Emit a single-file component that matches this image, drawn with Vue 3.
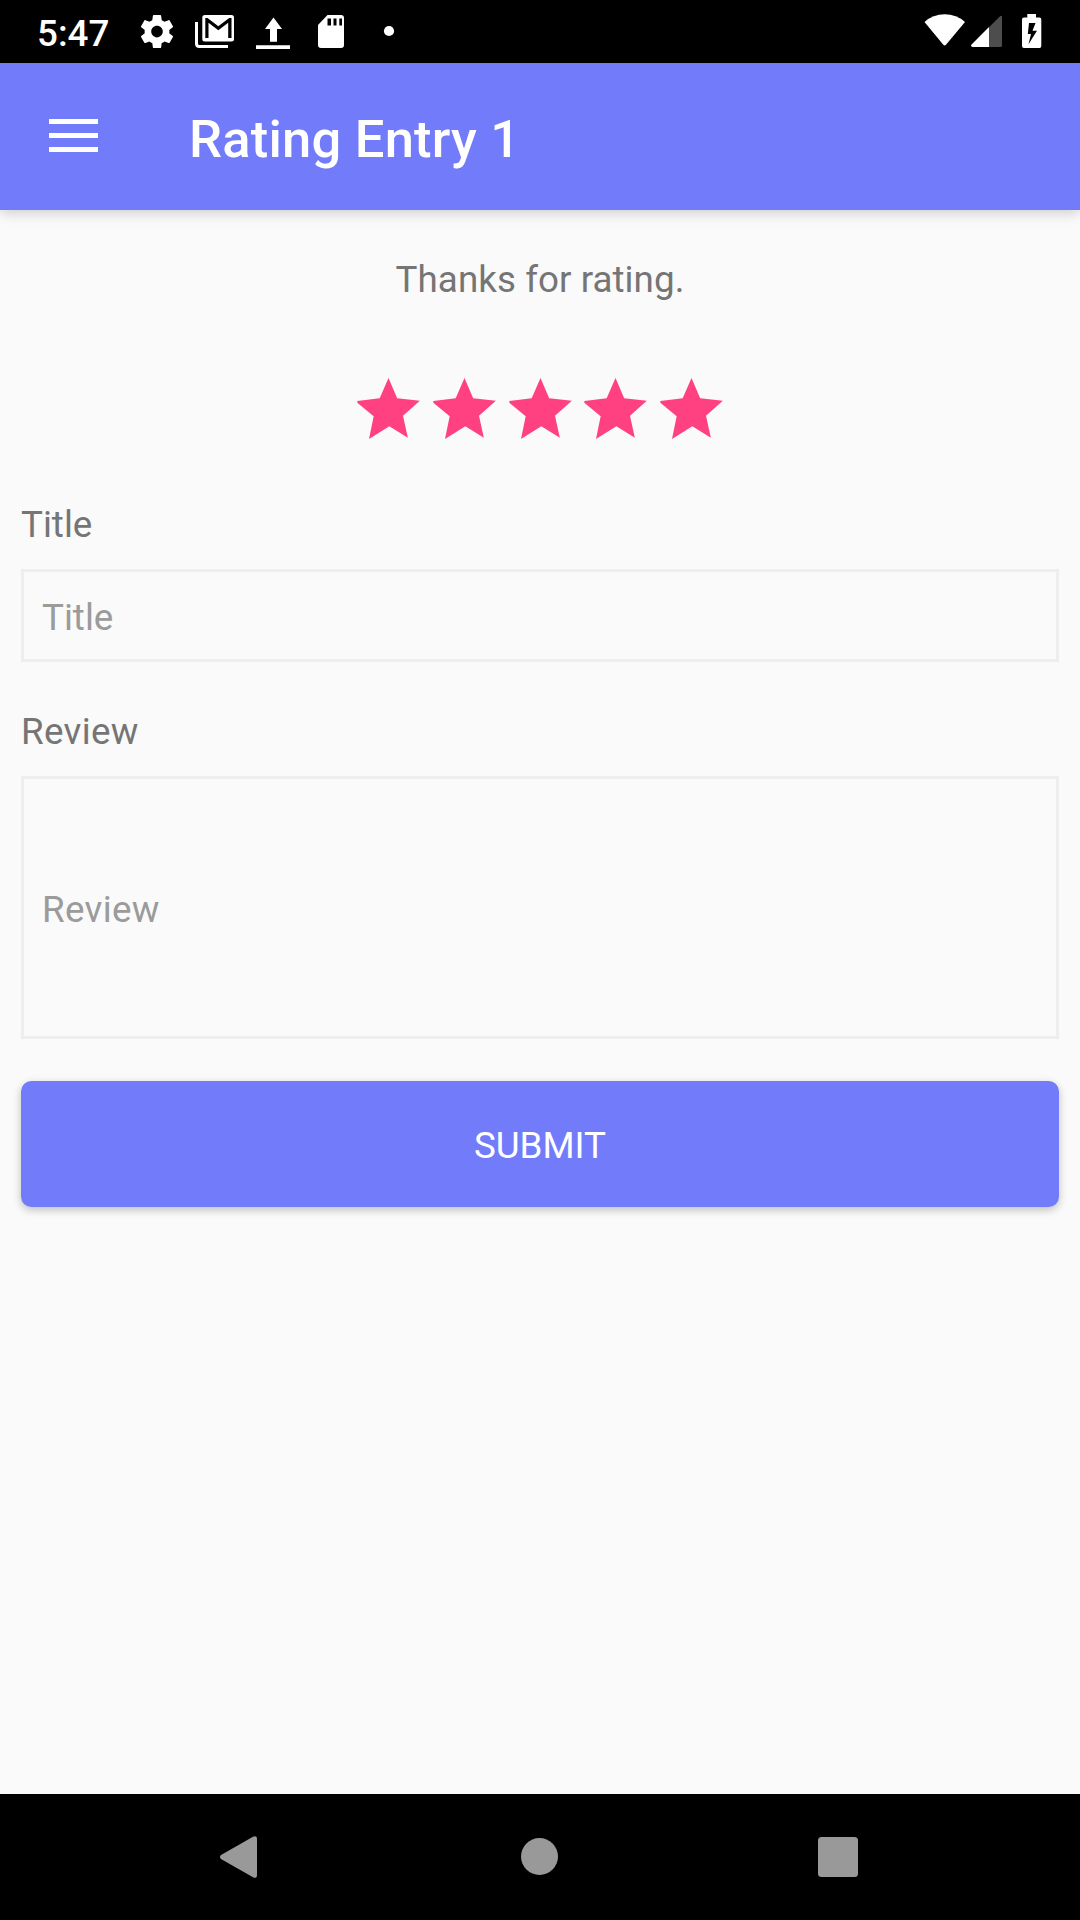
<script setup>
import { ref } from 'vue'

const stars = [1, 2, 3, 4, 5]
const title = ref('')
const review = ref('')
</script>

<template>
  <div class="screen">
    <header class="status">
      <span class="clock">5:47</span>
      <svg class="notices" width="260" height="63" viewBox="0 0 260 63" fill="#fff">
        <g transform="translate(7.2 11.8) scale(1.65)">
          <path d="M19.43 12.98c.04-.32.07-.64.07-.98s-.03-.66-.07-.98l2.11-1.65c.19-.15.24-.42.12-.64l-2-3.46c-.12-.22-.39-.3-.61-.22l-2.49 1c-.52-.4-1.08-.73-1.69-.98l-.38-2.65C14.46 2.18 14.25 2 14 2h-4c-.25 0-.46.18-.49.42l-.38 2.65c-.61.25-1.17.59-1.69.98l-2.49-1c-.23-.09-.49 0-.61.22l-2 3.46c-.13.22-.07.49.12.64l2.11 1.65c-.04.32-.07.65-.07.98s.03.66.07.98l-2.11 1.65c-.19.15-.24.42-.12.64l2 3.46c.12.22.39.3.61.22l2.49-1c.52.4 1.08.73 1.69.98l.38 2.65c.03.24.24.42.49.42h4c.25 0 .46-.18.49-.42l.38-2.65c.61-.25 1.17-.59 1.69-.98l2.49 1c.23.09.49 0 .61-.22l2-3.46c.12-.22.07-.49-.12-.64l-2.11-1.65zM12 15.5c-1.93 0-3.5-1.57-3.500-3.5s1.57-3.500 3.500-3.500 3.500 1.57 3.500 3.500-1.57 3.500-3.500 3.500z" />
        </g>
        <path d="M66.500 22V43.500Q66.500 46.500 69.500 46.500H98" fill="none" stroke="#fff" stroke-width="3" />
        <rect x="72.300" y="15" width="31.700" height="26.500" rx="2.500" />
        <path d="M75.300 38V18H77.500L88.300 26.200L99.200 18H101.500V38H98.200V22.800L88.300 30.200L78.500 22.800V38Z" fill="#000" />
        <path d="M143.500 17.500L152 29H147V41.700H140V29H135ZM126 45.300H160V49H126Z" />
        <path fill-rule="evenodd" d="M197.500 15H211Q214 15 214 18V45Q214 48 211 48H191Q188 48 188 45V25ZM197.500 18.500V25.500H201V18.500ZM203.500 18.500V25.500H206.500V18.500ZM209.300 18.500V25.500H212V18.500Z" />
        <circle cx="259" cy="31" r="5.100" />
      </svg>
      <svg class="system" width="130" height="63" viewBox="920 0 130 63" fill="#fff">
        <path d="M924.500 22Q933 14.300 944.700 14.300T965 22L946 44.800Q944.700 46.300 943.300 44.800Z" />
        <path d="M999.500 16.800Q1002 14.500 1002 17V45.500Q1002 47 1000.500 47H989V27.300Z" fill="#4d4d4d" />
        <path d="M989 27V47H972.500Q970 46.500 971.800 44.300Z" />
        <path fill-rule="evenodd" d="M1027.300 14H1036V17.500H1039.500Q1041.300 17.500 1041.300 19.500V46Q1041.300 48 1039.500 48H1024Q1022 48 1022 46V19.500Q1022 17.500 1024 17.500H1027.300ZM1029 23L1027.800 34H1031L1028.500 44.300L1037 30.700H1032.500L1035.500 23Z" />
      </svg>
    </header>

    <div class="appbar">
      <button class="menu" aria-label="Menu"><i /><i /><i /></button>
      <h1>Rating Entry 1</h1>
    </div>

    <main>
      <p class="thanks">Thanks for rating.</p>
      <div class="stars">
        <svg v-for="s in stars" :key="s" width="63" height="61" viewBox="52 413 189 183">
          <path d="M146.500 413L172.500 474L240.500 481L190 526L204.500 592L149 558L88 596L102 528L53 487V482L120 474Z" fill="#ff4081" />
        </svg>
      </div>
      <label for="title">Title</label>
      <input id="title" v-model="title" class="field" placeholder="Title">
      <label for="review" class="wide">Review</label>
      <input id="review" v-model="review" class="field large wide" placeholder="Review">
      <button class="submit">SUBMIT</button>
    </main>

    <nav>
      <svg width="1080" height="126" viewBox="0 1794 1080 126" fill="#999">
        <path d="M221 1855L253 1836.700Q257 1835 257 1839V1875Q257 1879 253 1877.300L221 1859Q219 1857 221 1855Z" />
        <circle cx="539.500" cy="1856.500" r="18.500" />
        <rect x="818" y="1837" width="40" height="40" rx="3.500" />
      </svg>
    </nav>
  </div>
</template>

<style>
body {
  margin: 0;
}
</style>

<style scoped>
* {
  box-sizing: border-box;
}
.screen {
  width: 1080px;
  height: 1920px;
  display: flex;
  flex-direction: column;
  background: #fafafa;
  font-family: Roboto, sans-serif;
  font-size: 36.75px;
  line-height: 43px;
  color: #757575;
  overflow: hidden;
}
.status {
  height: 63px;
  flex: none;
  display: flex;
  align-items: center;
  background: #000;
  color: #fff;
}
.clock {
  width: 96px;
  margin-left: 37px;
  padding-top: 4px;
  font-weight: 500;
}
.notices {
  overflow: visible;
  margin-left: -3px;
}
.system {
  margin-left: auto;
  margin-right: 30px;
}
.appbar {
  height: 147px;
  flex: none;
  display: flex;
  align-items: center;
  background: #727cfb;
  color: #fff;
  box-shadow: 0 3px 12px rgba(0, 0, 0, 0.18);
}
button {
  border: 0;
  padding: 0;
  font: inherit;
  color: #fff;
}
.menu {
  width: 49px;
  margin: 0 91px 2px 49px;
  display: flex;
  flex-direction: column;
  gap: 9px;
  background: none;
}
.menu i {
  height: 5px;
  background: #fff;
}
h1 {
  margin: 0;
  padding-top: 4px;
  font-size: 52.5px;
  line-height: 62px;
  font-weight: 500;
  letter-spacing: 0.22px;
}
main {
  flex: 1;
  padding: 48px 21px 0;
  display: flex;
  flex-direction: column;
}
.thanks {
  margin: 0;
  text-align: center;
  letter-spacing: 0.06px;
}
.stars {
  margin: 77px 0 64px;
  display: flex;
  justify-content: center;
  gap: 12.6px;
}
.stars svg {
  display: block;
}
.field {
  width: 100%;
  height: 93px;
  margin: 23px 0 48px;
  padding: 4px 18px 0;
  border: 3px solid #eee;
  border-radius: 0;
  outline: 0;
  background: transparent;
  font: inherit;
  color: #212121;
}
.field::placeholder {
  color: #9b9b9b;
  opacity: 1;
}
.large {
  height: 263px;
  margin-bottom: 42px;
}
.wide {
  letter-spacing: 0.35px;
}
.submit {
  height: 126px;
  padding-top: 3px;
  border-radius: 10.5px;
  background: #727cfb;
  box-shadow: 0 3px 8px rgba(0, 0, 0, 0.24);
}
nav {
  height: 126px;
  flex: none;
  background: #000;
}
nav svg {
  display: block;
}
</style>
